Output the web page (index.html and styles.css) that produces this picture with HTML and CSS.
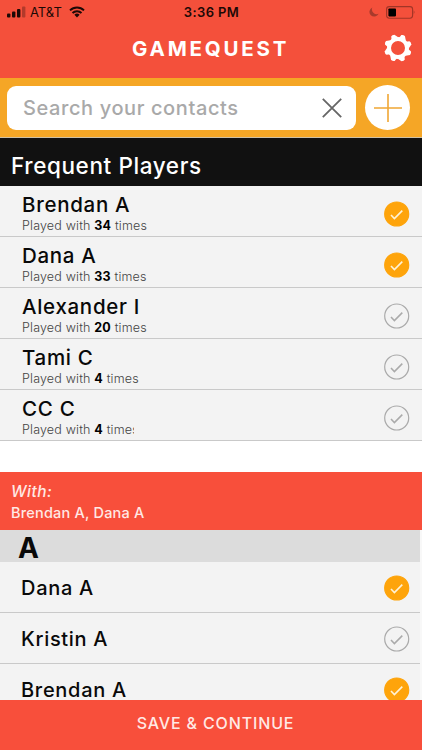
FILE: index.html
```html
<!DOCTYPE html>
<html lang="en">
<head>
    <meta charset="UTF-8">
    <meta name="viewport" content="width=device-width, initial-scale=1.0">
    <title>GameQuest</title>
    <link rel="stylesheet" href="styles.css">
</head>
<body>
    <!-- Shared icons -->
    <svg class="defs" width="0" height="0">
        <symbol id="check" viewBox="0 0 26 26">
            <circle cx="12.7" cy="13" r="12"/>
            <path d="M7 14l3.4 3.6 7.9-8" fill="none" stroke="#aaa" stroke-width="1.5"/>
        </symbol>
        <symbol id="check-on" viewBox="0 0 26 26">
            <circle cx="12.7" cy="13" r="12"/>
            <path d="M7 14l3.4 3.6 7.9-8" fill="none" stroke="#fff3d6" stroke-width="1.6"/>
        </symbol>
    </svg>

    <div class="app">
        <header class="header">
            <div class="status-bar">
                <div class="status-left">
                    <svg class="signal" width="19" height="12" viewBox="0 0 19 12">
                        <rect x="0" y="7.5" width="3.4" height="4" rx="1"/>
                        <rect x="5" y="5.5" width="3.4" height="6" rx="1"/>
                        <rect x="10" y="3" width="3.4" height="8.5" rx="1"/>
                        <rect x="15" y="0.5" width="3.4" height="11" rx="1" opacity="0.3"/>
                    </svg>
                    <span class="carrier">AT&amp;T</span>
                    <svg class="wifi" width="16" height="12" viewBox="0 0 16 12">
                        <path d="M1 4.4a10 10 0 0 1 14 0M3.5 7a6.4 6.4 0 0 1 9 0" fill="none" stroke="#1c0906" stroke-width="2"/>
                        <path d="M5.4 8.8a3.8 3.8 0 0 1 5.2 0L8 11.6z"/>
                    </svg>
                </div>
                <span class="time">3:36 PM</span>
                <div class="status-right">
                    <svg width="10" height="10" viewBox="0 0 10 10">
                        <path d="M3.3 0.4a4.8 4.8 0 1 0 6.3 6.4A4.9 4.9 0 0 1 3.3 0.4z" fill="#a83a2c"/>
                    </svg>
                    <svg width="30" height="13" viewBox="0 0 30 13">
                        <rect x="0.6" y="0.6" width="26" height="11.6" rx="2.6" fill="none" stroke="#a13527" stroke-width="1.1"/>
                        <rect x="2.4" y="2.4" width="7.6" height="8" rx="0.8" fill="#000"/>
                        <path d="M27.8 4.2q1.6 2.2 0 4.4z" fill="#8a2d21"/>
                    </svg>
                </div>
            </div>
            <div class="title-bar">
                <h1>GAMEQUEST</h1>
                <svg class="gear" width="28" height="28" viewBox="-14 -14 28 28">
                    <circle r="9" fill="none" stroke="#fff" stroke-width="4"/>
                    <g fill="#fff">
                        <path id="tooth" d="M1 -10L3.3 -12.9Q5 -13.6 6.9 -12L7.8 -7.5z"/>
                        <use href="#tooth" transform="rotate(45)"/>
                        <use href="#tooth" transform="rotate(90)"/>
                        <use href="#tooth" transform="rotate(135)"/>
                        <use href="#tooth" transform="rotate(180)"/>
                        <use href="#tooth" transform="rotate(225)"/>
                        <use href="#tooth" transform="rotate(270)"/>
                        <use href="#tooth" transform="rotate(315)"/>
                    </g>
                </svg>
            </div>
        </header>

        <div class="search-bar">
            <div class="search-box">
                <span class="placeholder">Search your contacts</span>
                <svg width="20" height="20" viewBox="0 0 20 20">
                    <path d="M0.8 0.8L19.2 19.2M19.2 0.8L0.8 19.2" stroke="#666" stroke-width="1.8"/>
                </svg>
            </div>
            <div class="add-btn">
                <svg width="28" height="28" viewBox="0 0 28 28">
                    <path d="M14 0V28M0 14H28" stroke="#f0a735" stroke-width="1.6"/>
                </svg>
            </div>
        </div>

        <h2 class="section-title">Frequent Players</h2>
        <div class="frequent">
            <div class="row">
                <div class="player">
                    <div class="name">Brendan A</div>
                    <div class="played">Played with <b>34</b> times</div>
                </div>
                <svg class="check on"><use href="#check-on"/></svg>
            </div>
            <div class="row">
                <div class="player">
                    <div class="name">Dana A</div>
                    <div class="played">Played with <b>33</b> times</div>
                </div>
                <svg class="check on"><use href="#check-on"/></svg>
            </div>
            <div class="row">
                <div class="player">
                    <div class="name">Alexander I</div>
                    <div class="played">Played with <b>20</b> times</div>
                </div>
                <svg class="check"><use href="#check"/></svg>
            </div>
            <div class="row">
                <div class="player">
                    <div class="name">Tami C</div>
                    <div class="played">Played with <b>4</b> times</div>
                </div>
                <svg class="check"><use href="#check"/></svg>
            </div>
            <div class="row">
                <div class="player">
                    <div class="name">CC C</div>
                    <div class="played cut">Played with <b>4</b> times</div>
                </div>
                <svg class="check"><use href="#check"/></svg>
            </div>
        </div>

        <div class="selected">
            <div class="with">With:</div>
            <div class="with-names">Brendan A, Dana A</div>
        </div>

        <div class="contacts">
            <div class="letter">A</div>
            <div class="row">
                <div class="name">Dana A</div>
                <svg class="check on"><use href="#check-on"/></svg>
            </div>
            <div class="row">
                <div class="name">Kristin A</div>
                <svg class="check"><use href="#check"/></svg>
            </div>
            <div class="row">
                <div class="name">Brendan A</div>
                <svg class="check on"><use href="#check-on"/></svg>
            </div>
        </div>

        <footer class="footer"><span>SAVE &amp; CONTINUE</span></footer>
    </div>
</body>
</html>
```
FILE: styles.css
```css
* {
    margin: 0;
    padding: 0;
    box-sizing: border-box;
}

body {
    font-family: Inter, "Liberation Sans", sans-serif;
    background: #fff;
    color: #090909;
}

svg {
    display: block;
    flex-shrink: 0;
}

.defs {
    position: absolute;
}

.app {
    width: 422px;
    height: 750px;
    display: flex;
    flex-direction: column;
    overflow: hidden;
    white-space: nowrap;
}

/* Header */
.header {
    height: 78px;
    flex-shrink: 0;
    background: #f4503b;
}

.status-bar {
    height: 24px;
    display: grid;
    grid-template-columns: 1fr auto 1fr;
    align-items: center;
    padding: 0 6px 0 7px;
    color: #1c0906;
    font-size: 13px;
}

.status-left,
.status-right {
    display: flex;
    align-items: center;
}

.status-left {
    fill: #1c0906;
}

.carrier {
    margin-left: 4px;
    width: 33px;
}

.wifi {
    margin-left: 6px;
}

.time {
    font-weight: 600;
    letter-spacing: 0.4px;
}

.status-right {
    justify-content: flex-end;
    gap: 7px;
}

.title-bar {
    height: 48px;
    display: flex;
    align-items: center;
    padding: 0 10px 0 132px;
    justify-content: space-between;
}

h1 {
    color: #fff;
    font-size: 20.5px;
    font-weight: 700;
    letter-spacing: 2.8px;
}

/* Search */
.search-bar {
    height: 60px;
    flex-shrink: 0;
    display: flex;
    align-items: center;
    gap: 9px;
    padding: 0 0 0 7px;
    background: #f5a626;
    border-bottom: 1px solid #cfc0a4;
}

.search-box {
    width: 349px;
    height: 44px;
    display: flex;
    align-items: center;
    justify-content: space-between;
    padding: 0 14px 0 16px;
    background: #fff;
    border-radius: 9px;
}

.placeholder {
    color: #a9a9a9;
    font-size: 20px;
    font-weight: 500;
    letter-spacing: 0.6px;
}

.add-btn {
    width: 45px;
    height: 45px;
    display: flex;
    align-items: center;
    justify-content: center;
    background: #fff;
    border-radius: 50%;
}

/* Frequent players */
.section-title {
    height: 48px;
    flex-shrink: 0;
    padding-left: 11px;
    line-height: 56px;
    background: #111;
    color: #fff;
    font-size: 22.5px;
    font-weight: 500;
    letter-spacing: 0.6px;
}

.frequent {
    height: 286px;
    flex-shrink: 0;
    background: #fff;
}

.row {
    height: 51px;
    display: flex;
    align-items: center;
    justify-content: space-between;
    padding: 6px 12px 0 22px;
    background: #f3f3f3;
    border-bottom: 1px solid #c9c9c9;
}

.name {
    font-size: 20.5px;
    font-weight: 500;
    line-height: 24px;
    letter-spacing: 0.7px;
}

.played {
    color: #444;
    font-size: 12.5px;
    font-weight: 300;
    line-height: 18px;
    letter-spacing: 0.18px;
}

.played b {
    color: #000;
    font-weight: 700;
}

/* the last letter gets clipped by the cell */
.played.cut {
    width: 112px;
    overflow: hidden;
}

.check {
    width: 26px;
    height: 26px;
    fill: none;
    stroke: #aaa;
    stroke-width: 1.2;
}

.check.on {
    fill: #fea40b;
    stroke: #fea40b;
}

/* Selected players */
.selected {
    height: 58px;
    flex-shrink: 0;
    padding: 10px 0 0 11px;
    background: #f84f3b;
    color: #ffe9e5;
    font-weight: 500;
}

.with {
    font-size: 15.5px;
    font-style: italic;
    line-height: 20px;
    letter-spacing: 0.5px;
}

.with-names {
    font-size: 14.5px;
    line-height: 21px;
    letter-spacing: 0.2px;
}

/* Contacts */
.contacts {
    height: 170px;
    flex-shrink: 0;
    overflow: hidden;
    border-right: 2px solid #f8f8f8;
}

.letter {
    height: 32px;
    padding-left: 18px;
    line-height: 36px;
    background: #dcdcdc;
    font-size: 28px;
    font-weight: 700;
}

.contacts .row {
    padding: 2px 10px 0 21px;
}

.contacts .name {
    font-size: 20px;
}

.footer {
    flex: 1;
    display: flex;
    justify-content: center;
    padding: 13px 0 0 9px;
    background: #f84f3b;
    color: #ffe9e5;
    font-size: 16px;
    font-weight: 500;
    line-height: 20px;
    letter-spacing: 0.85px;
}
```
